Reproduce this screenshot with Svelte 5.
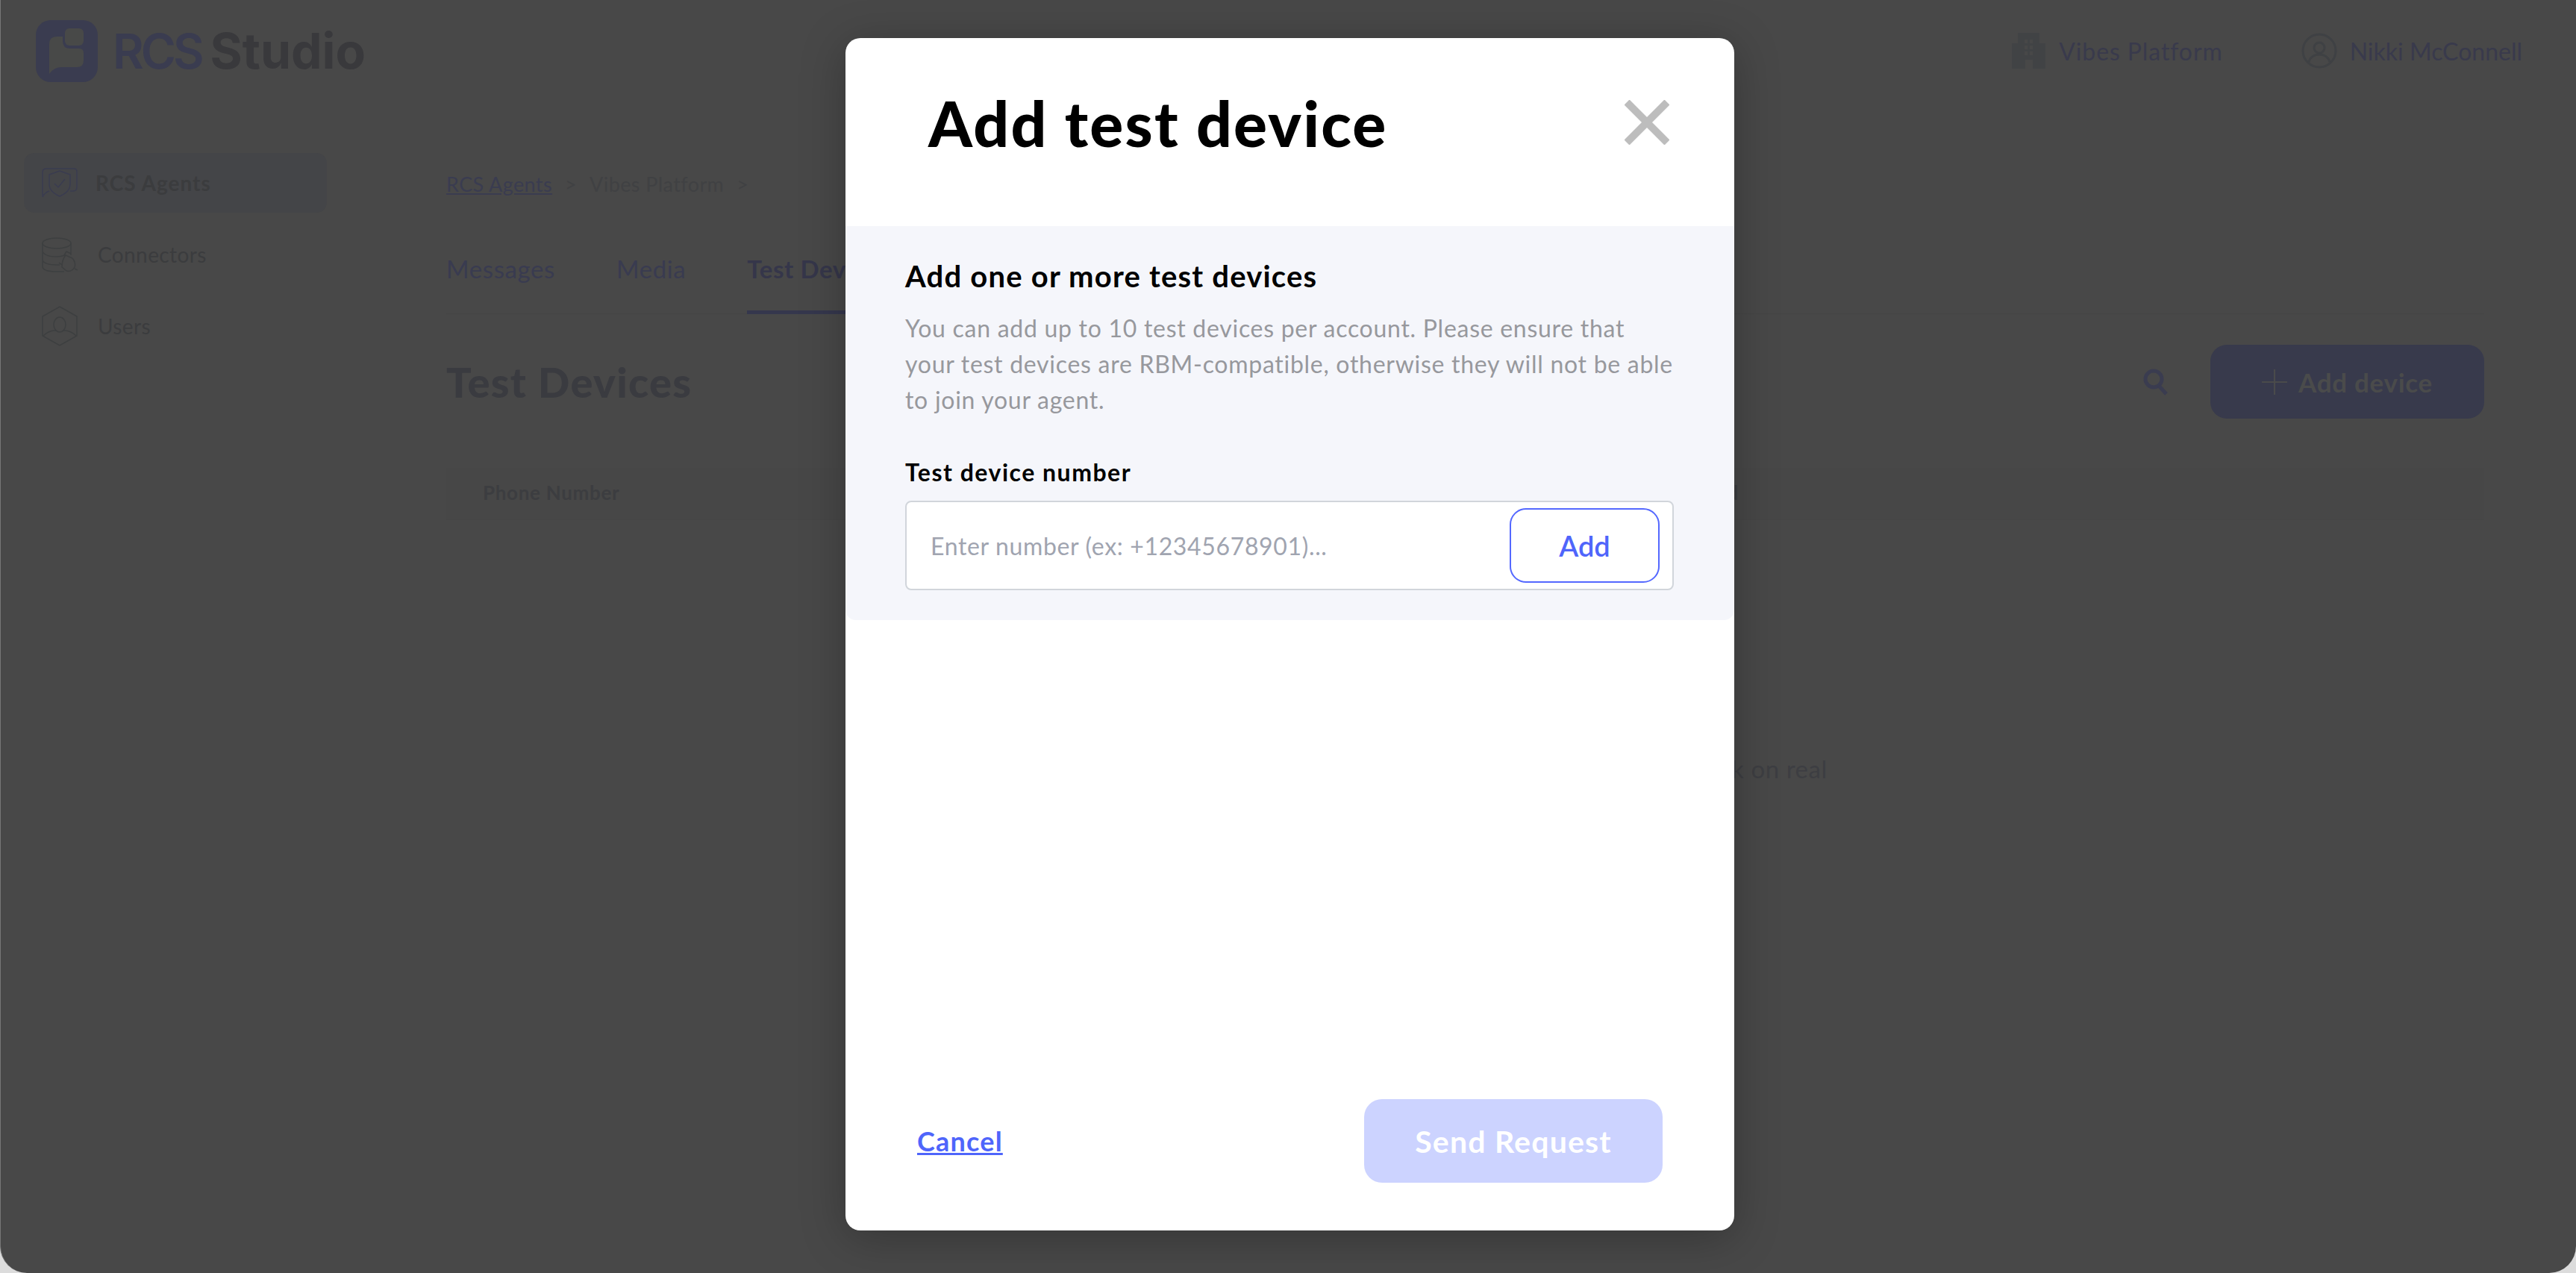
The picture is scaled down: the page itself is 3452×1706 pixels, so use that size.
<script lang="ts">
  const navItems = [
    { label: "RCS Agents", icon: "agents", active: true },
    { label: "Connectors", icon: "connectors", active: false },
    { label: "Users", icon: "users", active: false }
  ];
  const tabs = ["Messages", "Media", "Test Devices"];
</script>

<div class="page">
  <header class="topbar">
    <div class="brand">
      <svg class="logo" viewBox="0 0 83 83" width="83" height="83">
        <rect width="83" height="83" rx="20" fill="#3a3c50" />
        <path fill="#484948" d="M18 72V32Q18 22 28 22H36V28Q36 38 46 38H58Q64 38 64 44V54Q64 63 55 63H35Q24 63 18 72Z" />
        <rect fill="#484948" x="39" y="11" width="25" height="23" rx="6" />
      </svg>
      <span class="brand-rcs">RCS</span>
      <span class="brand-studio">Studio</span>
    </div>
    <div class="account">
      <div class="account-item">
        <svg viewBox="0 0 45 48" width="45" height="48" fill="#414345">
          <path fill-rule="evenodd" d="M8 0H37V14H45V48H28V36H18V48H0V14H8ZM17 9V14H21V9ZM24 9V14H28V9ZM17 17V22H21V17ZM24 17V22H28V17ZM17 25V30H21V25ZM24 25V30H28V25Z" />
        </svg>
        <span class="org">Vibes Platform</span>
      </div>
      <div class="account-item user">
        <svg viewBox="0 0 48 48" width="48" height="48" fill="none" stroke="#3f4144" stroke-width="3">
          <circle cx="24" cy="24" r="22" />
          <circle cx="24" cy="20" r="7" />
          <path d="M10 39Q13 29 24 29T38 39" />
        </svg>
        <span>Nikki McConnell</span>
      </div>
    </div>
  </header>

  <div class="body">
    <nav class="sidebar">
      {#each navItems as item}
        <div class="nav-item" class:active={item.active}>
          {#if item.icon === "agents"}
            <svg viewBox="0 0 48 40" width="48" height="40" fill="none" stroke="#3a3c50" stroke-width="1.5">
              <path d="M1 39V6Q1 1 6 1H43Q47 1 47 5V26Q47 31 42 31H38M1 39Q4 33 10 31" />
              <path d="M24 4L38 9V22Q38 32 24 38Q10 32 10 22V9Z" />
              <path d="M17 21L22 26L31 15" />
            </svg>
          {:else if item.icon === "connectors"}
            <svg viewBox="0 0 48 47" width="48" height="47" fill="none" stroke="#3d3f40" stroke-width="1.5">
              <ellipse cx="20" cy="8" rx="19" ry="7" />
              <path d="M1 8V39Q1 46 20 46H30M39 8V24M1 19Q4 26 20 26Q26 26 31 24M1 31Q4 37 20 37H24" />
              <path d="M32 24L41 28Q46 34 44 40Q40 47 33 45L27 40Q27 30 32 24ZM30 24L33 19L39 22M23 34L27 37M44 42L48 44" />
            </svg>
          {:else}
            <svg viewBox="0 0 48 54" width="48" height="54" fill="none" stroke="#3d3f40" stroke-width="1.5">
              <path d="M24 1L47 14V40L24 53L1 40V14Z" />
              <ellipse cx="24" cy="25" rx="8" ry="10" />
              <path d="M2 40Q8 34 16 33L19 33M46 40Q40 34 32 33L29 33" />
            </svg>
          {/if}
          <span>{item.label}</span>
        </div>
      {/each}
    </nav>

    <main class="content">
      <div class="crumbs">
        <a href="#agents">RCS Agents</a>
        <span>&gt;</span>
        <span>Vibes Platform</span>
        <span>&gt;</span>
      </div>
      <div class="tabs">
        {#each tabs as tab, i}
          <div class="tab" class:current={i === 2}>{tab}</div>
        {/each}
      </div>
      <div class="title-row">
        <h1>Test Devices</h1>
        <div class="actions">
          <svg viewBox="0 0 34 36" width="34" height="36" fill="none" stroke="#3a3c50" stroke-width="5">
            <circle cx="14" cy="14" r="11" />
            <path d="M21 23L31 34" />
          </svg>
          <div class="add-device">
            <svg viewBox="0 0 34 34" width="34" height="34" stroke="#4a4b4b" stroke-width="2"><path d="M17 0V34M0 17H34" /></svg>
            <span>Add device</span>
          </div>
        </div>
      </div>
      <div class="table-head">
        <span>Phone Number</span>
        <span>Date Added</span>
      </div>
      <p class="empty">Add test devices to preview how your RCS messages look on real</p>
    </main>
  </div>

  <div class="modal-wrap">
    <section class="modal">
      <div class="modal-head">
        <h2>Add test device</h2>
        <svg viewBox="0 0 60 60" width="60" height="60" stroke="#bdbdbd" stroke-width="10"><path d="M3 3L57 57M57 3L3 57" /></svg>
      </div>
      <div class="panel">
        <h3>Add one or more test devices</h3>
        <p>You can add up to 10 test devices per account. Please ensure that<br />your test devices are RBM-compatible, otherwise they will not be able<br />to join your agent.</p>
        <label for="device-number">Test device number</label>
        <div class="field">
          <input id="device-number" type="text" placeholder="Enter number (ex: +12345678901)..." />
          <button type="button" class="add">Add</button>
        </div>
      </div>
      <div class="modal-foot">
        <a href="#cancel" class="cancel">Cancel</a>
        <button type="button" class="send">Send Request</button>
      </div>
    </section>
  </div>
</div>

<style>
  :global(body) {
    margin: 0;
    background: #dcdcdc;
  }

  .page {
    position: relative;
    box-sizing: border-box;
    width: 3452px;
    height: 1706px;
    overflow: hidden;
    border-left: 1px solid #777;
    border-radius: 0 0 36px 36px;
    background: #484848;
    font-family: Lato, "Open Sans", sans-serif;
    color: #3b3c3f;
  }

  .topbar {
    display: flex;
    justify-content: space-between;
    align-items: center;
    height: 136px;
    padding: 0 72px 0 47px;
  }

  .brand {
    display: flex;
    align-items: center;
    font-family: Inter, sans-serif;
    font-size: 64px;
    font-weight: 600;
  }

  .logo {
    margin-right: 20px;
  }

  .brand-rcs {
    color: #3a3c50;
    margin-right: 12px;
    letter-spacing: -4px;
  }

  .brand-studio {
    color: #39393c;
    font-size: 66px;
    font-weight: 700;
  }

  .account {
    display: flex;
    align-items: center;
    color: #393a4c;
    font-size: 32px;
  }

  .org {
    letter-spacing: 0.9px;
  }

  .account-item {
    display: flex;
    align-items: center;
    gap: 18px;
  }

  .account-item.user {
    gap: 17px;
    margin-left: 105px;
  }

  .body {
    display: flex;
  }

  .sidebar {
    flex: none;
    box-sizing: border-box;
    width: 597px;
    padding: 69px 0 0 31px;
  }

  .nav-item {
    display: flex;
    align-items: center;
    gap: 27px;
    box-sizing: border-box;
    width: 406px;
    height: 80px;
    margin-bottom: 16px;
    padding-left: 24px;
    font-size: 28px;
    letter-spacing: 0.4px;
    color: #3b3c3e;
  }

  .nav-item svg {
    flex: none;
  }

  .nav-item.active {
    border-radius: 14px;
    background: #444548;
    font-weight: 700;
    gap: 24px;
    letter-spacing: 1px;
  }

  .content {
    flex: 1;
    padding: 95px 123px 0 0;
  }

  .crumbs {
    display: flex;
    gap: 17px;
    font-size: 27px;
    line-height: 32px;
    letter-spacing: 0.4px;
    color: #404143;
  }

  .crumbs a {
    color: #3a3c50;
  }

  .tabs {
    display: flex;
    gap: 82px;
    height: 144px;
    margin-top: 14px;
    padding-top: 63px;
    box-sizing: border-box;
    border-bottom: 1px solid #454545;
    font-size: 33px;
    line-height: 40px;
    letter-spacing: 0.6px;
    color: #393b50;
  }

  .tab.current {
    font-weight: 700;
    color: #35364a;
    border-bottom: 5px solid #35374d;
    height: 81px;
    box-sizing: border-box;
    padding-right: 40px;
  }

  .title-row {
    display: flex;
    justify-content: space-between;
    align-items: center;
    height: 99px;
    margin-top: 41px;
  }

  h1 {
    margin: 0;
    font-size: 56px;
    font-weight: 900;
    letter-spacing: 1.3px;
    color: #3a3b40;
  }

  .actions {
    display: flex;
    align-items: center;
    gap: 56px;
  }

  .add-device {
    display: flex;
    align-items: center;
    justify-content: center;
    gap: 15px;
    width: 367px;
    height: 99px;
    border-radius: 22px;
    background: #383a4c;
    color: #4a4b4b;
    font-size: 35px;
    font-weight: 700;
    letter-spacing: 0.7px;
  }

  .table-head {
    display: flex;
    justify-content: space-between;
    align-items: center;
    box-sizing: border-box;
    height: 70px;
    margin-top: 66px;
    padding: 0 999px 4px 49px;
    border-bottom: 1px solid #454545;
    background: #474747;
    font-size: 26px;
    font-weight: 700;
    letter-spacing: 0.7px;
    color: #3c3d40;
  }

  .empty {
    margin: 313px 0 0;
    text-align: center;
    font-size: 33px;
    letter-spacing: 0.55px;
    color: #3d3e42;
  }

  .modal-wrap {
    position: absolute;
    inset: 0;
    padding: 51px 0 0 1132px;
  }

  .modal {
    display: flex;
    flex-direction: column;
    box-sizing: border-box;
    width: 1191px;
    height: 1598px;
    border-radius: 20px;
    background: #fff;
    box-shadow: 0 10px 60px rgba(0, 0, 0, 0.26);
  }

  .modal-head {
    display: flex;
    justify-content: space-between;
    align-items: center;
    height: 252px;
    padding: 0 87px 26px 111px;
    box-sizing: border-box;
  }

  h2 {
    margin: 0;
    font-size: 84px;
    font-weight: 900;
    letter-spacing: 2.2px;
    color: #000;
  }

  .panel {
    box-sizing: border-box;
    height: 528px;
    padding: 42px 81px 0 80px;
    border-radius: 0 0 14px 14px;
    background: #f5f6fb;
  }

  h3 {
    margin: 0 0 21px;
    font-size: 40px;
    line-height: 50px;
    font-weight: 700;
    letter-spacing: 1.2px;
    color: #000;
  }

  .panel p {
    margin: 0 0 55px;
    font-size: 32px;
    line-height: 48px;
    letter-spacing: 0.72px;
    white-space: nowrap;
    color: #97989d;
  }

  label {
    display: block;
    margin-bottom: 20px;
    font-size: 32px;
    line-height: 36px;
    font-weight: 700;
    letter-spacing: 1.5px;
    color: #000;
  }

  .field {
    display: flex;
    align-items: center;
    box-sizing: border-box;
    height: 120px;
    padding: 0 17px 0 32px;
    border: 2px solid #d1d5db;
    border-radius: 8px;
    background: #fff;
  }

  input {
    flex: 1;
    min-width: 0;
    border: none;
    outline: none;
    background: none;
    padding: 0;
    font-family: inherit;
    font-size: 32px;
    letter-spacing: 0.65px;
  }

  input::placeholder {
    color: #a0a4b0;
  }

  .add {
    width: 201px;
    height: 100px;
    border: 2px solid #5468ff;
    border-radius: 22px;
    background: #fff;
    color: #4f65fb;
    font-family: inherit;
    font-size: 38px;
    font-weight: 600;
  }

  .modal-foot {
    display: flex;
    justify-content: space-between;
    align-items: center;
    margin-top: auto;
    padding: 0 96px 64px 96px;
  }

  .cancel {
    color: #4f65fb;
    font-size: 36px;
    font-weight: 700;
    letter-spacing: 1.2px;
  }

  .send {
    width: 400px;
    height: 112px;
    border: none;
    border-radius: 24px;
    background: #ccd3ff;
    color: #fff;
    font-family: inherit;
    font-size: 41px;
    font-weight: 700;
    letter-spacing: 1.2px;
  }
</style>
